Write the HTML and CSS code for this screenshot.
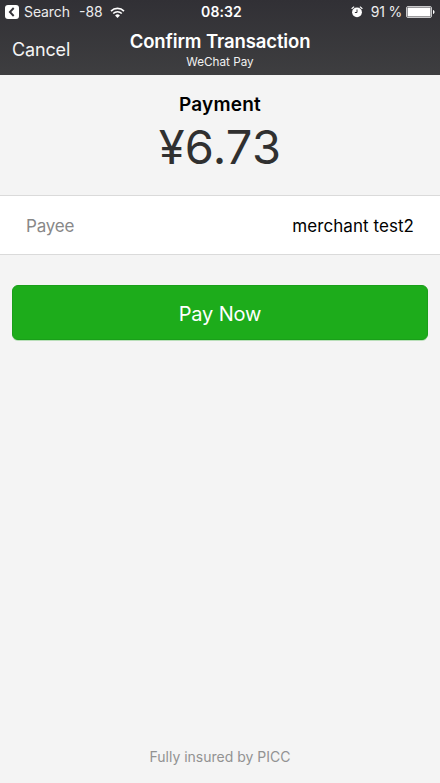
FILE: index.html
```html
<!DOCTYPE html>
<html lang="en">
<head>
<meta charset="utf-8">
<title>Confirm Transaction</title>
<link rel="stylesheet" href="styles.css">
</head>
<body>
<header class="top">
  <div class="status">
    <div class="status-left">
      <svg class="back" width="14" height="14" viewBox="0 0 14 14"><rect width="14" height="14" rx="3" fill="#fff"/><path d="M8.700 3 4.900 7l3.800 4" fill="none" stroke="#353439" stroke-width="1.900"/></svg>
      <span class="search">Search</span>
      <span class="signal">-88</span>
      <svg class="wifi" width="15" height="11" viewBox="0 0 15 11"><g fill="none" stroke="#fff" stroke-width="1.600"><path d="M1 4.100a9.200 9.200 0 0 1 13 0"/><path d="M3.200 6.500a6.100 6.100 0 0 1 8.600 0"/></g><path d="M7.500 11 5.100 8.500a3.400 3.400 0 0 1 4.800 0z" fill="#fff"/></svg>
    </div>
    <time class="clock">08:32</time>
    <div class="status-right">
      <svg class="alarm" width="12" height="12" viewBox="0 0 12 12"><circle cx="6" cy="6.300" r="4.900" fill="#fff"/><path d="M.7 2.900A6 6 0 0 1 3.200.8M8.800.8a6 6 0 0 1 2.500 2.100" fill="none" stroke="#fff" stroke-width="1.200"/><path d="M6 3.500v3H3.900" fill="none" stroke="#353439" stroke-width="1"/></svg>
      <span class="percent">91 %</span>
      <svg class="battery" width="29" height="12" viewBox="0 0 29 12"><rect x=".5" y=".5" width="25" height="11" rx="1.500" fill="none" stroke="#c9c9cb"/><rect x="1.500" y="1.500" width="23" height="9" rx=".5" fill="#fff"/><path d="M27 4c2 .3 2 3.700 0 4z" fill="#fff"/></svg>
    </div>
  </div>
  <div class="nav">
    <a class="cancel">Cancel</a>
    <div class="titles">
      <h1>Confirm Transaction</h1>
      <p>WeChat Pay</p>
    </div>
  </div>
</header>
<main>
  <section class="amount">
    <h2>Payment</h2>
    <strong>¥6.73</strong>
  </section>
  <section class="row">
    <span class="label">Payee</span>
    <span class="value">merchant test2</span>
  </section>
  <button class="pay"><span>Pay Now</span></button>
</main>
<footer>Fully insured by PICC</footer>
</body>
</html>
```
FILE: styles.css
```css
* { box-sizing: border-box; }
body {
  margin: 0;
  height: 783px;
  display: flex;
  flex-direction: column;
  background: #f4f4f4;
  font-family: Inter, "Liberation Sans", sans-serif;
  color: #000;
  overflow: hidden;
}
h1, h2, p { margin: 0; }
.top {
  height: 75px;
  background: linear-gradient(#313035, #3e3e40);
  color: #fff;
}
.status {
  height: 24px;
  display: grid;
  grid-template-columns: 1fr auto 1fr;
  align-items: center;
  font-size: 14px;
  line-height: 24px;
}
.status-left, .status-right { display: flex; align-items: center; }
.status-left { padding-left: 5px; color: #ececed; }
.status-right { justify-content: flex-end; padding-right: 5px; color: #ececed; }
.search { margin-left: 5px; width: 46px; letter-spacing: -0.1px; }
.signal { margin-left: 9px; width: 25px; }
.wifi { margin-left: 6px; }
.clock { font-weight: 600; letter-spacing: 0.1px; padding-left: 3px; }
.percent { margin: 0 4px 0 8px; letter-spacing: -0.200px; }
.nav {
  height: 51px;
  padding: 0 12px;
  display: grid;
  grid-template-columns: 1fr auto 1fr;
}
.cancel { font-size: 18px; line-height: 52px; letter-spacing: -0.150px; color: #f4f4f4; }
.titles { text-align: center; }
.titles h1 { font-size: 18.500px; font-weight: 600; line-height: 24px; padding-top: 5px; letter-spacing: -0.120px; }
.titles p { font-size: 11.700px; line-height: 19px; color: #f0f0f0; }
.amount {
  height: 120px;
  padding-top: 18px;
  display: flex;
  flex-direction: column;
  align-items: center;
}
.amount h2 { font-size: 19px; font-weight: 600; line-height: 24px; letter-spacing: 0.200px; }
.amount strong { font-size: 47px; font-weight: 380; line-height: 60px; letter-spacing: 0.300px; color: #303030; }
.row {
  height: 60px;
  padding: 2px 26px 0;
  display: flex;
  justify-content: space-between;
  align-items: center;
  border-top: 1px solid #dadada;
  border-bottom: 1px solid #dadada;
  background: #fff;
  font-size: 17px;
}
.label { color: #888; letter-spacing: -0.200px; }
.value { letter-spacing: 0.060px; }
.pay {
  display: block;
  width: 416px;
  height: 55px;
  margin: 30px auto 0;
  padding: 2px 0 0;
  border: 1px solid #1a9f1a;
  border-radius: 6px;
  box-shadow: 0 1px 0 #b9dfb9;
  background: #1dac1b;
  color: #fff;
  font-family: inherit;
  font-size: 20px;
  letter-spacing: -0.150px;
}
footer {
  margin-top: auto;
  padding-bottom: 16px;
  text-align: center;
  font-size: 14px;
  line-height: 20px;
  color: #929292;
}
```
